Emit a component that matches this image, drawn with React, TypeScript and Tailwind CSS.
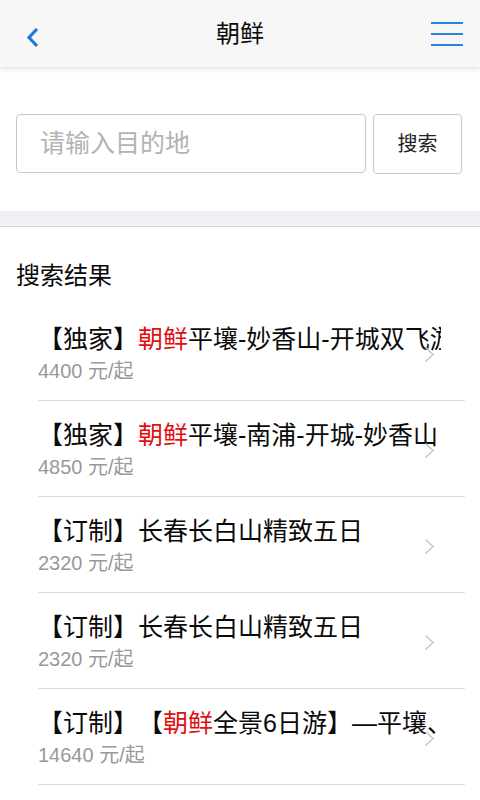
import React from "react";

const FONT = { fontFamily: '"Liberation Sans", "Noto Sans CJK SC", sans-serif' };

type Item = { parts: { t: string; red?: boolean }[]; price: string };

const items: Item[] = [
  { parts: [{ t: "【独家】" }, { t: "朝鲜", red: true }, { t: "平壤-妙香山-开城双飞游" }], price: "4400" },
  { parts: [{ t: "【独家】" }, { t: "朝鲜", red: true }, { t: "平壤-南浦-开城-妙香山" }], price: "4850" },
  { parts: [{ t: "【订制】长春长白山精致五日" }], price: "2320" },
  { parts: [{ t: "【订制】长春长白山精致五日" }], price: "2320" },
  { parts: [{ t: "【订制】【" }, { t: "朝鲜", red: true }, { t: "全景6日游】—平壤、开城" }], price: "14640" },
  { parts: [{ t: "【订制】长春长白山精致五日" }], price: "2320" },
];

function Chevron() {
  return (
    <svg width="12" height="18" viewBox="0 0 12 18" className="absolute right-[30px] top-[40px]">
      <path d="M2.5 2.5 L10 9.5 L2.5 16.5" fill="none" stroke="#c7c7cc" strokeWidth="1.6" />
    </svg>
  );
}

export default function App() {
  return (
    <div
      className="w-[480px] h-[800px] overflow-hidden bg-white text-[#0a0a0a] [text-spacing-trim:space-all]"
      style={FONT}
    >
      <header className="relative z-10 h-[67px] bg-[#f7f7f8] shadow-[0_2px_5px_rgba(0,0,0,0.12)] flex items-center justify-between px-[24px]">
        <svg width="20" height="24" viewBox="0 0 20 24" className="mt-[6px]">
          <path d="M13 4 L5 12.5 L13 21" fill="none" stroke="#1c79d8" strokeWidth="3.2" />
        </svg>
        <div className="absolute left-0 right-0 top-0 h-[67px] flex items-center justify-center text-[24px] leading-none pointer-events-none">
          朝鲜
        </div>
        <div className="flex flex-col gap-[9px] mr-[-7px] mt-[1px]">
          <div className="w-[32px] h-[2px] bg-[#2a84d9]" />
          <div className="w-[32px] h-[2px] bg-[#2a84d9]" />
          <div className="w-[32px] h-[2px] bg-[#2a84d9]" />
        </div>
      </header>

      <div className="h-[144px] flex items-start pt-[47px] pl-[16px] pr-[18px] gap-[7px]">
        <div className="w-[350px] h-[59px] border border-[#c8c8c8] rounded-[4px] flex items-center pl-[23px] text-[25px] text-[#b3b3b3]">
          请输入目的地
        </div>
        <div className="w-[89px] h-[60px] border border-[#c8c8c8] rounded-[4px] flex items-center justify-center text-[20px] text-[#222]">
          搜索
        </div>
      </div>

      <div className="h-[16px] bg-[#efeff4] border-b border-[#d6d6d9]" />

      <div className="h-[78px] flex items-end pb-[14px] pl-[16px] text-[24px] leading-[30px]">搜索结果</div>

      <ul className="ml-[38px] mr-[15px]">
        {items.map((it, i) => (
          <li key={i} className="relative h-[96px] border-b border-[#dcdcdc] pt-[18px]">
            <div className="w-[403px] overflow-hidden whitespace-nowrap text-[25px] leading-[32px] text-[#0a0a0a]">
              {it.parts.map((p, j) => (
                <span key={j} className={p.red ? "text-[#e01010]" : ""}>
                  {p.t}
                </span>
              ))}
            </div>
            <div className="mt-[4px] text-[20px] leading-[24px] text-[#999999]">{it.price} 元/起</div>
            <Chevron />
          </li>
        ))}
      </ul>
    </div>
  );
}
